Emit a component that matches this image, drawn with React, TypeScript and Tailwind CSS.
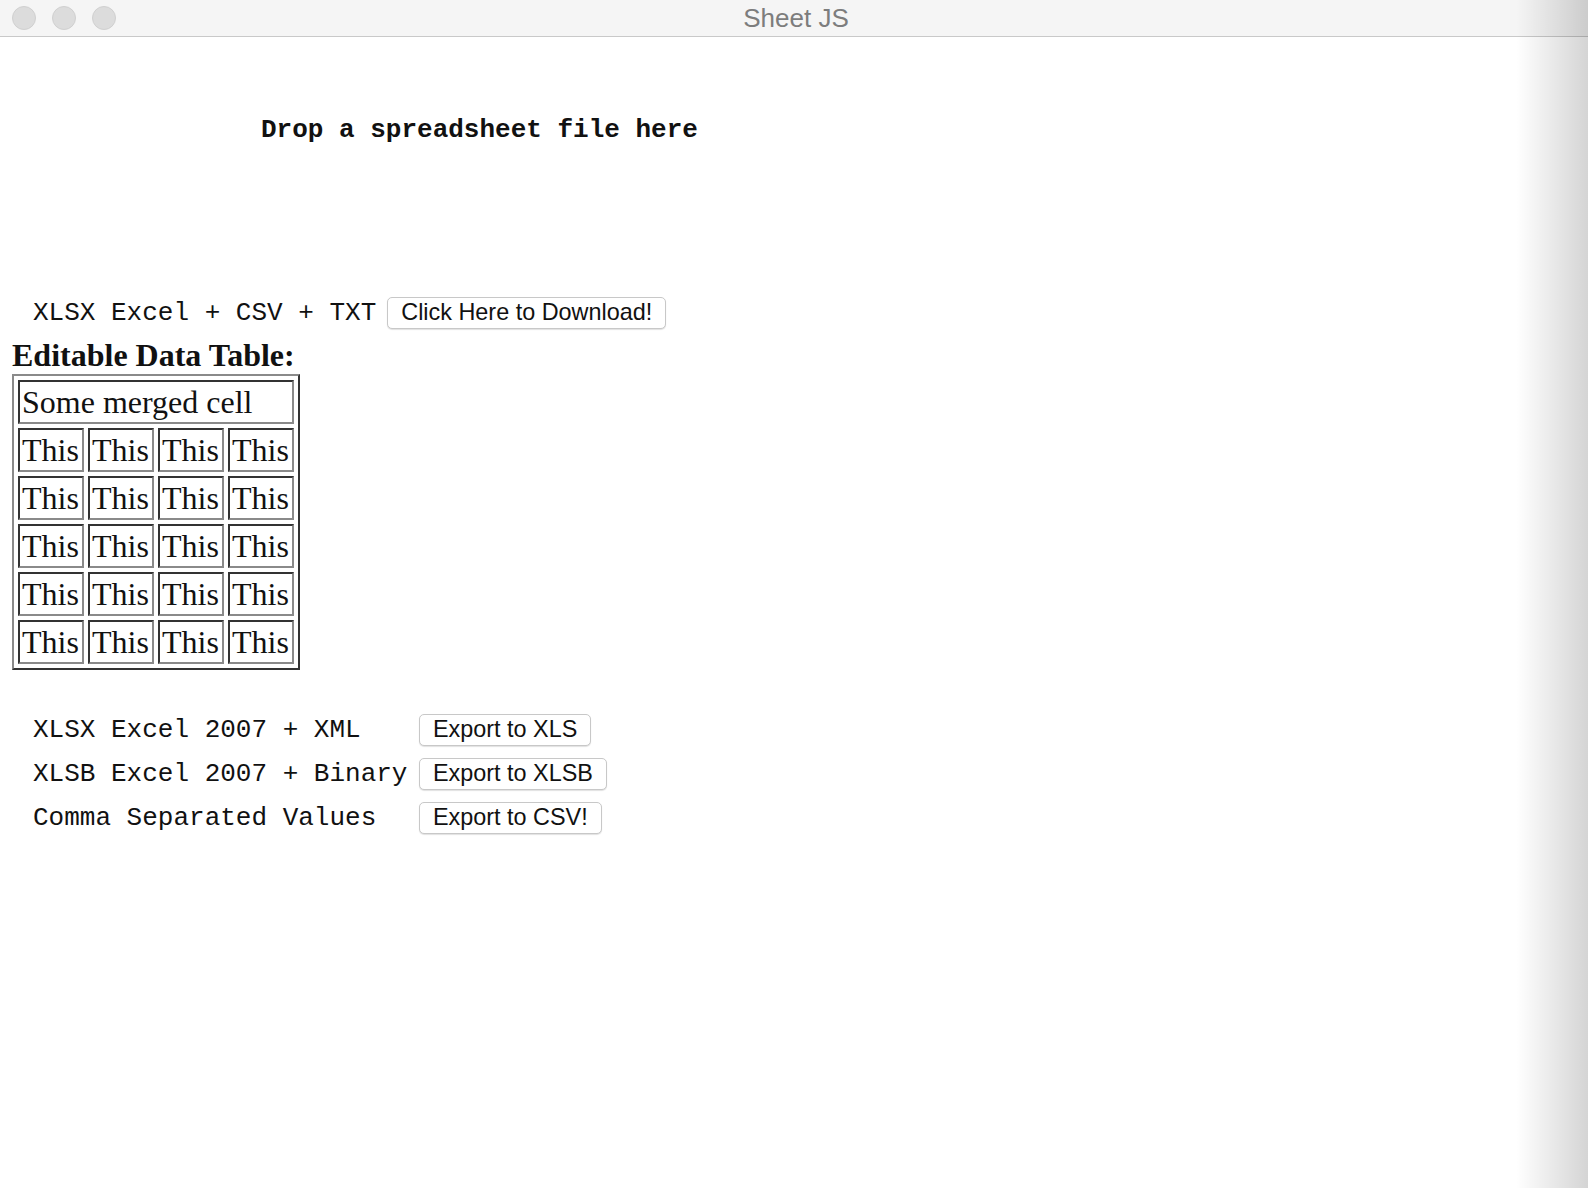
import React from "react";

const mono = { fontFamily: '"Liberation Mono", "Courier New", monospace' };
const serif = { fontFamily: '"Liberation Serif", "Times New Roman", serif' };
const sans = { fontFamily: '"Liberation Sans", Arial, sans-serif' };

const rows = [0, 1, 2, 3, 4];
const cols = [0, 1, 2, 3];

const exports = [
  { label: "XLSX Excel 2007 + XML", button: "Export to XLS" },
  { label: "XLSB Excel 2007 + Binary", button: "Export to XLSB" },
  { label: "Comma Separated Values", button: "Export to CSV!" },
];

function MacButton({ children }: { children: React.ReactNode }) {
  return (
    <button
      style={sans}
      className="flex h-[32px] items-center whitespace-nowrap rounded-[5px] border border-[#c8c8c8] bg-white px-[13px] text-[23.4px] leading-none text-[#111] shadow-[0_1px_1px_rgba(0,0,0,0.12)]"
    >
      {children}
    </button>
  );
}

export default function App() {
  return (
    <div className="relative h-[1188px] w-[1588px] overflow-hidden bg-white text-[#111]">
      {/* window chrome */}
      <div className="grid h-[37px] grid-cols-[1fr_auto_1fr] items-center border-b border-[#c9c9c9] bg-[#f5f5f5]">
        <div className="flex gap-[16px] pl-[12px]">
          <span className="h-[24px] w-[24px] rounded-full border border-[#d0d0d0] bg-[#dcdcdc]" />
          <span className="h-[24px] w-[24px] rounded-full border border-[#d0d0d0] bg-[#dcdcdc]" />
          <span className="h-[24px] w-[24px] rounded-full border border-[#d0d0d0] bg-[#dcdcdc]" />
        </div>
        <div style={sans} className="pl-[4px] text-[26px] leading-none text-[#7d7d7d]">
          Sheet JS
        </div>
        <div />
      </div>

      {/* drop zone */}
      <div className="h-[260px] pl-[261px] pt-[78px]">
        <p style={mono} className="text-[26px] font-bold leading-[30px]">
          Drop a spreadsheet file here
        </p>
      </div>

      <div className="flex items-center gap-[11px] pl-[33px]">
        <span style={mono} className="whitespace-pre text-[26px] leading-[30px]">
          XLSX Excel + CSV + TXT
        </span>
        <MacButton>Click Here to Download!</MacButton>
      </div>

      <h3 style={serif} className="ml-[12px] mt-[8px] text-[32px] font-bold leading-[36px]">
        Editable Data Table:
      </h3>

      <table
        style={{ ...serif, borderSpacing: "4px" }}
        className="ml-[12px] mt-[1px] border-separate border-2 border-t-[#8a8a8a] border-l-[#8a8a8a] border-r-[#333] border-b-[#333]"
      >
        <tbody>
          <tr>
            <td
              colSpan={4}
              className="border-2 border-t-[#333] border-l-[#333] border-r-[#8a8a8a] border-b-[#8a8a8a] p-[2px] text-[32px] leading-[36px]"
            >
              Some merged cell
            </td>
          </tr>
          {rows.map((r) => (
            <tr key={r}>
              {cols.map((c) => (
                <td
                  key={c}
                  className="w-[66px] border-2 border-t-[#333] border-l-[#333] border-r-[#8a8a8a] border-b-[#8a8a8a] p-[2px] text-[32px] leading-[36px]"
                >
                  This
                </td>
              ))}
            </tr>
          ))}
        </tbody>
      </table>

      <div className="mt-[44px] grid grid-cols-[386px_auto] justify-start gap-y-[12px] pl-[33px]">
        {exports.map((e) => (
          <React.Fragment key={e.button}>
            <span style={mono} className="flex items-center whitespace-pre text-[26px] leading-[30px]">
              {e.label}
            </span>
            <div className="flex">
              <MacButton>{e.button}</MacButton>
            </div>
          </React.Fragment>
        ))}
      </div>

      {/* shadow at the right edge of the window */}
      <div className="pointer-events-none absolute right-0 top-0 h-full w-[72px] bg-gradient-to-r from-[rgba(0,0,0,0)] to-[rgba(0,0,0,0.17)]" />
    </div>
  );
}
